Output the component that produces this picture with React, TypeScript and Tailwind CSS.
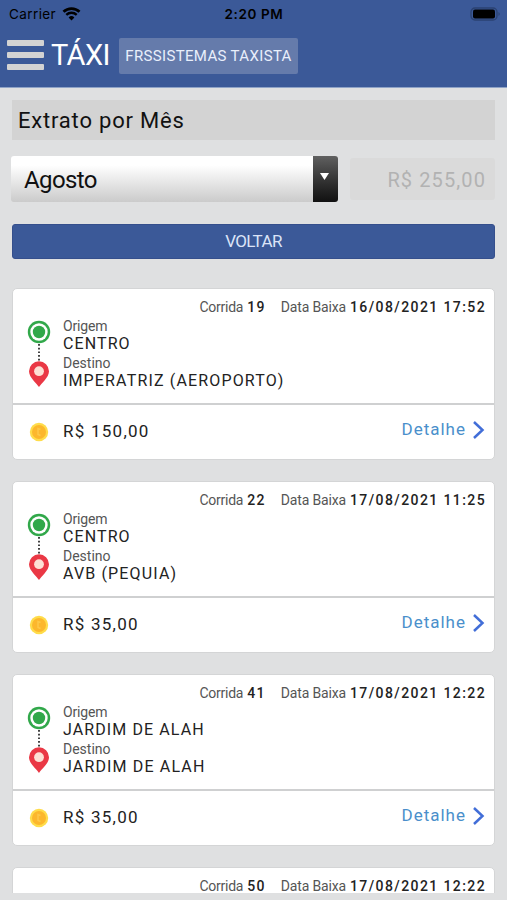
import React from "react";

interface Ride {
	id: string;
	date: string;
	origin?: string;
	destination?: string;
	value?: string;
}

const rides: Ride[] = [
	{
		id: "19",
		date: "16/08/2021 17:52",
		origin: "CENTRO",
		destination: "IMPERATRIZ (AEROPORTO)",
		value: "R$ 150,00",
	},
	{
		id: "22",
		date: "17/08/2021 11:25",
		origin: "CENTRO",
		destination: "AVB (PEQUIA)",
		value: "R$ 35,00",
	},
	{
		id: "41",
		date: "17/08/2021 12:22",
		origin: "JARDIM DE ALAH",
		destination: "JARDIM DE ALAH",
		value: "R$ 35,00",
	},
	{
		id: "50",
		date: "17/08/2021 12:22",
	},
];

const StatusBar: React.FC = () => (
	<div className="grid h-7 grid-cols-3 items-center pl-[9px] pr-[6px] font-['Inter','Liberation_Sans',sans-serif] text-black">
		<div className="flex items-center gap-[6px] text-[13.5px] tracking-[0.4px]">
			Carrier
			<svg width="19" height="14" viewBox="0 0 19 14" fill="none">
				<path d="M1.500 4.800a11.500 11.500 0 0 1 16 0" stroke="#000" strokeWidth="2.800" />
				<path d="M4.300 7.900a7.400 7.400 0 0 1 10.400 0" stroke="#000" strokeWidth="2.300" />
				<path d="M9.500 13.400 6.600 10.500a4.100 4.100 0 0 1 5.800 0Z" fill="#000" />
			</svg>
		</div>
		<div className="pr-[2px] text-center text-[13.5px] font-semibold tracking-[0.6px]">
			2:20 PM
		</div>
		<svg className="justify-self-end" width="31" height="15" viewBox="0 0 31 15">
			<rect x="1" y="1" width="26" height="12" rx="4" fill="none" stroke="#2b4271" strokeWidth="1.300" />
			<rect x="3" y="2.500" width="22" height="9" rx="2" fill="#000" />
			<path d="M28.500 5q2.500 2 0 4Z" fill="#2b4271" />
		</svg>
	</div>
);

const RouteIcon: React.FC = () => (
	<svg width="24" height="68" viewBox="0 0 24 68">
		<circle cx="12" cy="12" r="11.200" fill="#31a84a" />
		<circle cx="12" cy="12" r="8.700" fill="#fff" />
		<circle cx="12" cy="12" r="6.200" fill="#31a84a" />
		<path d="M12 24v18" stroke="#222" strokeWidth="1.700" strokeDasharray="1.700 2" />
		<path
			d="M12 67C10 63.500 2 57.500 2 51.200a10 10 0 0 1 20 0C22 57.500 14 63.500 12 67Z"
			fill="#ea3845"
		/>
		<circle cx="12" cy="51.200" r="4.900" fill="#fde0d5" />
	</svg>
);

const CoinIcon: React.FC = () => (
	<svg width="20" height="20" viewBox="0 0 20 20">
		<circle cx="10" cy="10" r="9.200" fill="#ffdc4a" />
		<circle cx="10" cy="10" r="7" fill="#fcb72c" />
		<path
			d="M11.500 7.500 9 6.500v6l2.500 1"
			fill="none"
			stroke="#fdc848"
			strokeWidth="1.500"
		/>
	</svg>
);

const RideCard: React.FC<{ ride: Ride }> = ({ ride }) => (
	<div className="h-[172px] shrink-0 rounded-[5px] border border-[#d4d5d6] bg-white text-[#222]">
		<div className="h-[114px] pl-[14px] pr-[8px] pt-2">
			<div className="flex h-5 items-center justify-end gap-[15px] pt-px text-[14px] whitespace-nowrap">
				<div className="flex items-center gap-[4px]">
					<span className="tracking-[-0.25px] text-[#555]">Corrida</span>
					<span className="text-[14px] font-medium tracking-[1.3px]">{ride.id}</span>
				</div>
				<div className="flex items-center gap-[4px]">
					<span className="tracking-[-0.15px] text-[#555]">Data Baixa</span>
					<span className="text-[14px] font-medium tracking-[1.4px]">{ride.date}</span>
				</div>
			</div>
			{ride.origin && (
				<div className="flex gap-[12px]">
					<div className="pt-[3px]">
						<RouteIcon />
					</div>
					<div>
						<div className="h-[18px] text-[14px] leading-[18px] tracking-[-0.15px] text-[#555]">
							Origem
						</div>
						<div className="h-[18.5px] text-[16px] leading-[18px] tracking-[1.1px]">
							{ride.origin}
						</div>
						<div className="h-[18px] text-[14px] leading-[18px] text-[#555]">
							Destino
						</div>
						<div className="h-[18px] text-[16px] leading-[18px] tracking-[1.15px]">
							{ride.destination}
						</div>
					</div>
				</div>
			)}
		</div>
		{ride.value && (
			<div className="flex h-[56px] items-center border-t-2 border-[#cfd0d1] pl-4 pr-[9px]">
				<CoinIcon />
				<span className="ml-[14px] text-[17px] tracking-[1.25px]">{ride.value}</span>
				<span className="mb-1 ml-auto text-[17px] tracking-[1px] text-[#4a8fcb]">
					Detalhe
				</span>
				<svg className="mb-1 ml-[6px]" width="13" height="20" viewBox="0 0 13 20">
					<path d="m2 2 8.500 8L2 18" fill="none" stroke="#426ed8" strokeWidth="2.500" />
				</svg>
			</div>
		)}
	</div>
);

const App: React.FC = () => (
	<div className="flex h-[900px] w-[507px] flex-col overflow-hidden bg-[#dfe0e1] font-['Roboto','Liberation_Sans',sans-serif]">
		<header className="h-[88px] shrink-0 border-b border-[#8fa3c7] bg-[#3b5998]">
			<StatusBar />
			<div className="flex h-14 items-center pl-[7px]">
				<div className="flex w-[37px] flex-col gap-[6px] pb-[2px]">
					<div className="h-[6px] rounded-[1px] bg-[#d3d3d3]" />
					<div className="h-[6px] rounded-[1px] bg-[#d3d3d3]" />
					<div className="h-[6px] rounded-[1px] bg-[#d3d3d3]" />
				</div>
				<span className="ml-[7px] w-[61px] text-[29px] tracking-[-0.6px] text-white">
					TÁXI
				</span>
				<div className="ml-[7px] flex h-9 w-[179px] items-center justify-center rounded-[2px] bg-[#657bab] text-[15px] tracking-[0.35px] text-[#e9effb] whitespace-nowrap">
					FRSSISTEMAS TAXISTA
				</div>
			</div>
		</header>

		<main className="flex h-[805px] flex-col overflow-hidden px-3 pt-3">
			<h1 className="flex h-10 shrink-0 items-center bg-[#d3d3d3] pl-[6px] text-[22px] tracking-[0.8px] text-[#111]">
				Extrato por Mês
			</h1>
			<div className="-ml-px mt-4 flex h-[46px] shrink-0 items-center gap-3">
				<div className="flex h-full w-[327px] overflow-hidden rounded-[3px]">
					<div className="flex flex-1 items-center bg-linear-to-b from-white from-20% to-[#cbcbcb] pl-[13px] pt-[2px] text-[24px] tracking-[-0.6px] text-[#111]">
						Agosto
					</div>
					<div className="flex w-[25px] justify-center bg-linear-to-b from-[#606060] to-[#111] pt-4">
						<svg className="-ml-[2px]" width="9" height="9" viewBox="0 0 9 9">
							<path d="M0 1h9L4.500 8Z" fill="#fff" />
						</svg>
					</div>
				</div>
				<div className="flex h-[42px] flex-1 items-center justify-end rounded-[3px] bg-[#dadada] pr-[9px] pt-[2px] text-[20px] tracking-[1.1px] text-[#b2b2b2]">
					R$ 255,00
				</div>
			</div>
			<button className="mt-[22px] h-[35px] shrink-0 rounded-[3px] border border-[#354f8c] bg-[#3b5998] text-[17px] tracking-[-0.6px] text-[#dbe4f7]">
				VOLTAR
			</button>
			<div className="mt-[29px] flex flex-col gap-[21px]">
				{rides.map((ride) => (
					<RideCard key={ride.id} ride={ride} />
				))}
			</div>
		</main>
	</div>
);

export default App;
